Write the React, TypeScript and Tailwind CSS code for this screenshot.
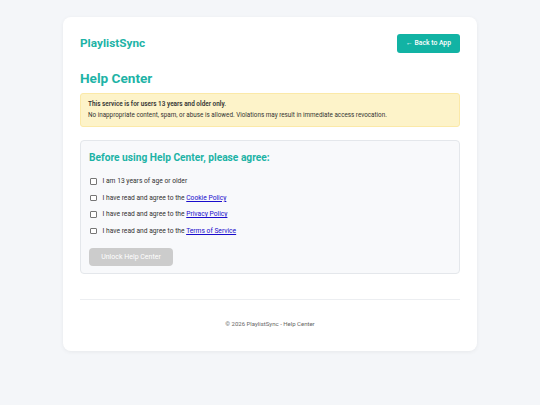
import React from 'react';

const items = [
  { text: 'I am 13 years of age or older' },
  { text: 'I have read and agree to the ', link: 'Cookie Policy' },
  { text: 'I have read and agree to the ', link: 'Privacy Policy' },
  { text: 'I have read and agree to the ', link: 'Terms of Service' },
];

const App: React.FC = () => {
  return (
    <div
      className="min-h-[405px] w-[540px] bg-[#f4f6f9] pt-[17px]"
      style={{ fontFamily: 'Roboto, "Liberation Sans", sans-serif' }}
    >
      <div className="mx-auto w-[414px] rounded-[8px] bg-white px-[17px] pb-[23px] pt-[17px] shadow-[0_1px_4px_rgba(0,0,0,0.06)]">
        <div className="flex h-[19px] items-center justify-between">
          <span className="text-[11.8px] font-bold text-[#1db3a6]">PlaylistSync</span>
          <button className="flex h-[19px] w-[63px] items-center justify-center rounded-[3px] bg-[#12b3a4] text-[6.8px] font-medium text-white">
            ← Back to App
          </button>
        </div>

        <h1 className="mt-[16px] text-[13.6px] font-bold leading-[18px] text-[#1db3a6]">Help Center</h1>

        <div className="mt-[6px] rounded-[3px] border border-[#fbe9a8] bg-[#fdf3c9] px-[7px] py-[5px] leading-[11px] text-[#333]">
          <p className="text-[6.4px] font-semibold">This service is for users 13 years and older only.</p>
          <p className="text-[6.3px]">No inappropriate content, spam, or abuse is allowed. Violations may result in immediate access revocation.</p>
        </div>

        <div className="mt-[13px] rounded-[4px] border border-[#e4e7eb] bg-[#f8f9fb] px-[8px] pb-[7px] pt-[9px]">
          <h2 className="text-[10.2px] font-bold leading-[16px] text-[#1db3a6]">Before using Help Center, please agree:</h2>
          <div className="mt-[7px] flex flex-col">
            {items.map((it, i) => (
              <label key={i} className="flex h-[16.6px] items-center text-[6.7px] text-[#333]">
                <span className="ml-[1px] mr-[6px] inline-block h-[6.5px] w-[6.5px] rounded-[1px] border border-[#767676] bg-white" />
                <span>
                  {it.text}
                  {it.link && <a className="text-[#1a0dcc] underline">{it.link}</a>}
                </span>
              </label>
            ))}
          </div>
          <button className="mt-[9px] h-[18px] w-[84px] rounded-[4px] bg-[#cccccc] text-[7px] text-white">
            Unlock Help Center
          </button>
        </div>

        <div className="mt-[25px] border-t border-[#eceef1]" />
        <p className="mt-[19px] text-center text-[6px] text-[#666]">© 2026 PlaylistSync - Help Center</p>
      </div>
    </div>
  );
};

export default App;
